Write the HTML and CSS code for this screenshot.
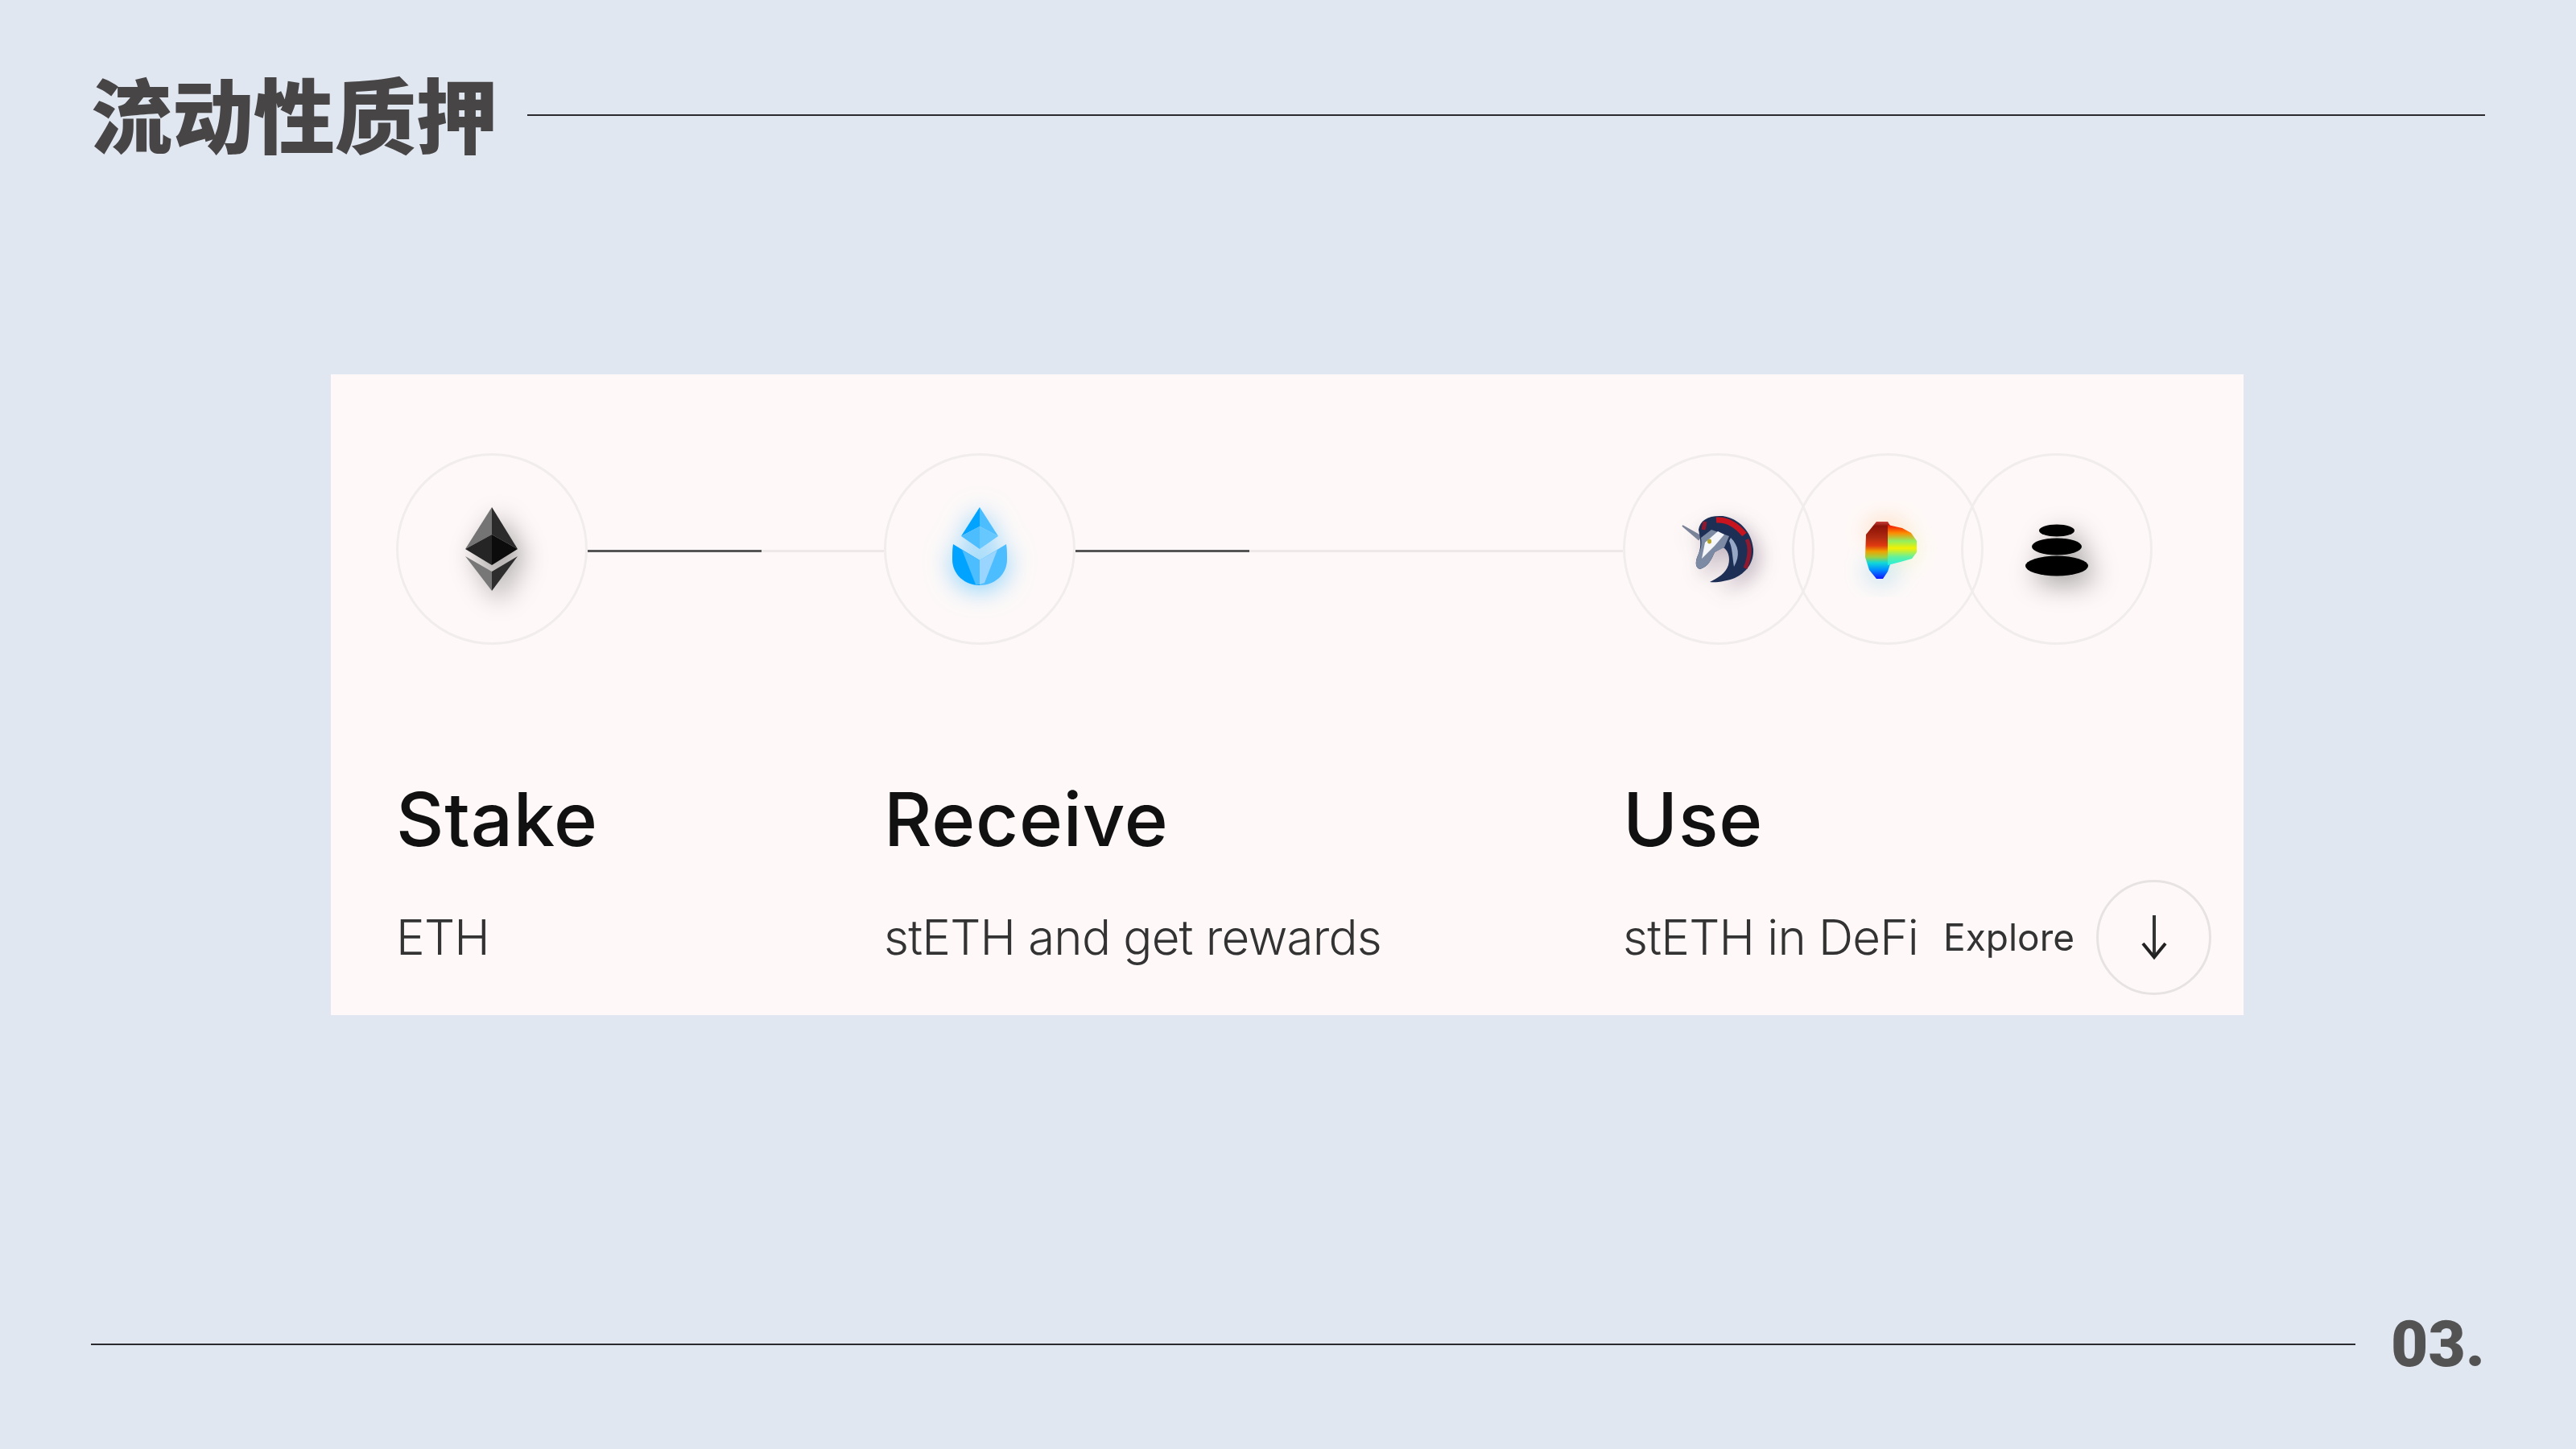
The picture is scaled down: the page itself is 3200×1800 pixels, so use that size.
FILE: index.html
```html
<!DOCTYPE html>
<html lang="zh">
<head>
<meta charset="utf-8">
<title>流动性质押</title>
<link rel="stylesheet" href="styles.css">
</head>
<body>
<div class="page">
  <header class="header">
    <div class="title-box"><h1 class="title">流动性质押</h1></div>
    <div class="rule"></div>
  </header>
  <main class="panel">
    <section class="step">
      <div class="icons">
        <div class="coin">
          <svg class="logo shadow-grey" viewBox="0 0 120 120" width="120" height="120">
            <polygon points="60,8 27,60 60,42" fill="#757474"/>
            <polygon points="60,8 92,60 60,42" fill="#2c2b2b"/>
            <polygon points="27,60 60,42 60,80" fill="#262525"/>
            <polygon points="92,60 60,42 60,80" fill="#0c0c0c"/>
            <polygon points="27,69 60,88 60,112" fill="#777"/>
            <polygon points="92,69 60,88 60,112" fill="#2e2d2d"/>
          </svg>
        </div>
        <div class="link"><span class="link-done link-a"></span><span class="link-todo"></span></div>
      </div>
      <h2 class="name">Stake</h2>
      <div class="sub"><span>ETH</span></div>
    </section>
    <section class="step">
      <div class="icons">
        <div class="coin">
          <svg class="logo shadow-blue" viewBox="0 0 120 120" width="120" height="120">
            <polygon points="60,8 37,44 60,32" fill="#00a3ff"/>
            <polygon points="60,8 83,44 60,32" fill="#4cbdff"/>
            <polygon points="37,44 60,32 60,60" fill="#4cbdff"/>
            <polygon points="83,44 60,32 60,60" fill="#66c8ff"/>
            <path d="M27 54 L60 74 L60 105 C42 105 26 92 26 73 C26 66 26 60 27 54Z" fill="#00a3ff"/>
            <path d="M93 54 L60 74 L60 105 C78 105 94 92 94 73 C94 66 94 60 93 54Z" fill="#4cbdff"/>
            <polygon points="38,61 60,74 60,104 55,104" fill="#4cbdff"/>
            <polygon points="60,74 82,61 66,102 60,104" fill="#99d5ff"/>
          </svg>
        </div>
        <div class="link"><span class="link-done link-a"></span><span class="link-todo"></span></div>
      </div>
      <h2 class="name">Receive</h2>
      <div class="sub"><span>stETH and get rewards</span></div>
    </section>
    <section class="step">
      <div class="icons">
        <div class="coin">
          <svg class="logo shadow-navy" viewBox="-5 2 160 120" width="160" height="120">
            <path d="M30 33 L53 46 L50 50 Z" fill="#7a8398" stroke="#7a8398" stroke-width="2"/>
            <path d="M50 38 C52 26 62 20 80 21 C100 24 116 40 118 62 C119 80 108 92 95 98 C85 102 72 104 64 103 C74 98 84 92 87 82 C90 72 86 62 80 60 L70 66 C66 75 62 84 52 87 C46 86 45 78 50 68 C54 58 52 48 50 38Z" fill="#1d2f55"/>
            <path d="M53 48 L66 38 L88 46 L82 60 L70 66 C66 75 62 84 52 87 C46 86 45 78 50 68 C54 60 54 54 53 48Z" fill="#7d8aa3"/>
            <path d="M58 54 L74 40 L82 44 L70 58 L60 68 L54 74 Z" fill="#f4f6fa"/>
            <path d="M90 48 C100 58 102 70 94 84 C92 72 92 60 88 52Z" fill="#97a8c6"/>
            <path d="M72 26 C85 25 97 32 107 44" class="mane-red"/>
            <path d="M110 50 C115 60 113 74 108 86" class="mane-dark"/>
            <path d="M58 28 L56 38" class="mane-dark"/>
            <ellipse cx="63.500" cy="52.500" rx="2.500" ry="3" fill="#b5a52a"/>
          </svg>
        </div>
        <div class="coin coin-stack">
          <svg class="logo" viewBox="-6 2 160 120" width="160" height="120">
            <defs>
              <linearGradient id="curveLeft" x1="0" y1="0" x2="0" y2="1">
                <stop offset="0" stop-color="#c8403a"/>
                <stop offset="0.08" stop-color="#8c1208"/>
                <stop offset="0.28" stop-color="#b02a10"/>
                <stop offset="0.42" stop-color="#e03a10"/>
                <stop offset="0.52" stop-color="#f0a000"/>
                <stop offset="0.62" stop-color="#a0d040"/>
                <stop offset="0.72" stop-color="#10d8d8"/>
                <stop offset="0.84" stop-color="#0090ff"/>
                <stop offset="1" stop-color="#1018ff"/>
              </linearGradient>
              <linearGradient id="curveRight" x1="0" y1="0" x2="0" y2="1">
                <stop offset="0" stop-color="#f01000"/>
                <stop offset="0.2" stop-color="#ff8a00"/>
                <stop offset="0.4" stop-color="#90f060"/>
                <stop offset="0.58" stop-color="#f4f000"/>
                <stop offset="0.8" stop-color="#60f0a0"/>
                <stop offset="1" stop-color="#20f0e0"/>
              </linearGradient>
            </defs>
            <g class="rainbow-glow">
              <ellipse cx="72" cy="40" rx="26" ry="16" fill="#ff9a40"/>
              <ellipse cx="92" cy="62" rx="18" ry="16" fill="#c8f040"/>
              <ellipse cx="66" cy="90" rx="22" ry="16" fill="#40b0e0"/>
            </g>
            <path d="M60 28 L74 28 L77 33 L77 81 L74 90 L68 99 L60 99 L51 88 L46 72 L47 44 Z" fill="url(#curveLeft)"/>
            <path d="M74 32 L92 36 L103 42 L110 52 L110 66 L104 74 L90 78 L74 82 Z" fill="url(#curveRight)"/>
          </svg>
        </div>
        <div class="coin coin-stack">
          <svg class="logo shadow-grey" viewBox="0 0 120 120" width="120" height="120">
            <ellipse cx="60" cy="37" rx="22" ry="7.500" fill="#000"/>
            <ellipse cx="60" cy="57" rx="31" ry="10.500" fill="#000"/>
            <ellipse cx="60" cy="81" rx="39" ry="12.500" fill="#000"/>
          </svg>
        </div>
      </div>
      <h2 class="name">Use</h2>
      <div class="sub">
        <span>stETH in DeFi</span>
        <span class="explore">Explore</span>
        <span class="round">
          <svg viewBox="0 0 40 60" width="40" height="60">
            <path d="M20 3 L20 54" class="arrow-line"/>
            <path d="M6 38 L20 55 L34 38" class="arrow-head"/>
          </svg>
        </span>
      </div>
    </section>
  </main>
  <footer class="footer">
    <div class="rule"></div>
    <div class="num-box"><span class="num">03.</span></div>
  </footer>
</div>
</body>
</html>
```

FILE: styles.css
```css
* { box-sizing: border-box; }
html, body { margin: 0; padding: 0; }
body { background: #e0e7f1; font-family: "Inter", "Noto Sans", sans-serif; }

.page {
  width: 3200px;
  height: 1800px;
  padding: 0 113px;
  display: flex;
  flex-direction: column;
  overflow: hidden;
}

.header {
  display: flex;
  align-items: center;
  padding-top: 95px;
  height: 191px;
}
.title-box { width: 542px; flex: none; height: 96px; }
.title {
  margin: -4px 0 0;
  font-family: "Noto Sans CJK SC", sans-serif;
  font-weight: 900;
  font-size: 101px;
  line-height: 96px;
  color: #484546;
  white-space: nowrap;
}
.rule { flex: 1; height: 2px; background: #2b2b2f; }

.panel {
  width: 2376px;
  height: 796px;
  margin: 274px 0 0 298px;
  padding: 98px 0 0 81px;
  background: #fef9f8;
  display: grid;
  grid-template-columns: 606px 918px 1fr;
}
.step { filter: blur(0.5px); }

.icons { display: flex; align-items: center; height: 238px; }
.coin {
  flex: none;
  width: 238px;
  height: 238px;
  border-radius: 50%;
  border: 3px solid #f1edec;
  display: flex;
  align-items: center;
  justify-content: center;
}
.coin-stack { margin-left: -28px; }
.logo { flex: none; }
.link { flex: 1; display: flex; height: 3px; margin-top: 4px; }
.link-done { width: 216px; background: #555; }
.link-todo { flex: 1; background: #eee9e8; }

.shadow-grey { filter: drop-shadow(9px 11px 16px rgba(0, 0, 0, 0.36)); }
.shadow-blue { filter: drop-shadow(0 5px 16px rgba(0, 163, 255, 0.5)); }
.shadow-navy { filter: drop-shadow(8px 8px 12px rgba(60, 30, 70, 0.3)); }
.rainbow-glow { filter: blur(14px); opacity: 0.28; }
.mane-red { fill: none; stroke: #c8141e; stroke-width: 7; }
.mane-dark { fill: none; stroke: #8f1a30; stroke-width: 5; }

.name {
  margin: 167px 0 0;
  font-size: 92px;
  line-height: 100px;
  font-weight: 450;
  color: #111;
  letter-spacing: 0.8px;
}
.sub {
  margin-top: 25px;
  height: 142px;
  display: flex;
  align-items: center;
  font-size: 60px;
  font-weight: 300;
  letter-spacing: -0.8px;
  color: #333;
  white-space: nowrap;
}
.explore { margin-left: 31px; font-size: 46px; font-weight: 400; letter-spacing: 0; color: #333; }
.round {
  margin-left: 27px;
  flex: none;
  width: 143px;
  height: 143px;
  border-radius: 50%;
  border: 3px solid #e8e3e3;
  display: flex;
  align-items: center;
  justify-content: center;
}
.arrow-line { fill: none; stroke: #333; stroke-width: 4; }
.arrow-head { fill: none; stroke: #222; stroke-width: 4; }

.footer {
  margin-top: auto;
  margin-bottom: 98px;
  height: 64px;
  display: flex;
  align-items: center;
}
.num-box { width: 161px; flex: none; height: 64px; display: flex; justify-content: flex-end; }
.num {
  font-family: "Roboto", sans-serif;
  font-weight: 900;
  font-size: 80px;
  line-height: 64px;
  color: #535353;
}
```
